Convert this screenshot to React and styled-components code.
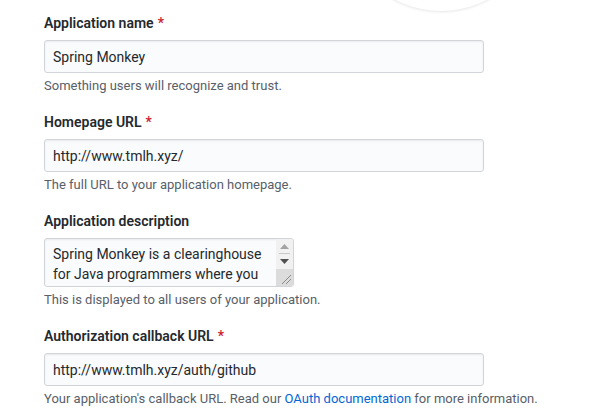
import React from "react";
import styled, { createGlobalStyle } from "styled-components";

const GlobalStyle = createGlobalStyle`
    html, body {
        margin: 0;
        padding: 0;
        background: #fff;
    }
    body {
        font-family: Roboto, "Noto Sans", "Liberation Sans", sans-serif;
        color: #24292e;
        overflow: hidden;
    }
`;

const fields = [
    {
        label: "Application name",
        required: true,
        value: "Spring Monkey",
        note: "Something users will recognize and trust.",
    },
    {
        label: "Homepage URL",
        required: true,
        value: "http://www.tmlh.xyz/",
        note: "The full URL to your application homepage.",
    },
    {
        label: "Application description",
        multiline: true,
        value:
            "Spring Monkey is a clearinghouse for Java programmers where you can share snippets, ask questions and find answers.",
        note: "This is displayed to all users of your application.",
    },
    {
        label: "Authorization callback URL",
        required: true,
        value: "http://www.tmlh.xyz/auth/github",
        docsLink: true,
    },
];

// fake classic scrollbar, headless chrome hides the real one
const ScrollBar = () => (
    <Track>
        <ArrowButton divider>
            <svg width="9" height="5" viewBox="0 0 9 5">
                <polygon points="0,5 4.5,0 9,5" fill="#a3a3a3" />
            </svg>
        </ArrowButton>
        <ArrowButton>
            <svg width="9" height="5" viewBox="0 0 9 5">
                <polygon points="0,0 4.5,5 9,0" fill="#505050" />
            </svg>
        </ArrowButton>
        <Resizer>
            <svg width="17" height="17" viewBox="0 0 17 17">
                <line x1="15" y1="6" x2="6" y2="15" stroke="#8a8a8a" />
                <line x1="15" y1="10" x2="10" y2="15" stroke="#8a8a8a" />
            </svg>
        </Resizer>
    </Track>
);

const App = () => {
    return (
        <Page>
            <GlobalStyle />
            <Avatar />
            <Form onSubmit={(e) => e.preventDefault()}>
                {fields.map((field) => (
                    <FormGroup key={field.label}>
                        <Label>
                            {field.label}
                            {field.required && <Required>*</Required>}
                        </Label>
                        {field.multiline ? (
                            <TextBox>
                                <TextArea defaultValue={field.value} rows={2} />
                                <ScrollBar />
                            </TextBox>
                        ) : (
                            <Input type="text" defaultValue={field.value} />
                        )}
                        {field.docsLink ? (
                            <Note>
                                Your application's callback URL. Read our{" "}
                                <Link href="#">OAuth documentation</Link> for
                                more information.
                            </Note>
                        ) : (
                            <Note>{field.note}</Note>
                        )}
                    </FormGroup>
                ))}
            </Form>
        </Page>
    );
};

const Page = styled.div`
    position: relative;
    width: 611px;
    height: 418px;
    overflow: hidden;
    background: #fff;
`;

const Avatar = styled.div`
    position: absolute;
    left: 342px;
    top: -186px;
    width: 196px;
    height: 196px;
    border-radius: 50%;
    background: #fff;
    border: 1px solid #f0f0f0;
    box-shadow: 0 1px 2px rgba(0, 0, 0, 0.05);
`;

const Form = styled.form`
    display: flex;
    flex-direction: column;
    gap: 17px;
    padding: 13px 0 0 44px;
`;

const FormGroup = styled.div`
    display: flex;
    flex-direction: column;
    align-items: flex-start;
`;

const Label = styled.label`
    display: block;
    font-size: 14px;
    line-height: 20px;
    font-weight: 600;
    color: #24292e;
    margin-bottom: 7px;
`;

const Required = styled.span`
    color: #cb2431;
    margin-left: 4px;
`;

const Input = styled.input`
    box-sizing: border-box;
    width: 440px;
    height: 33px;
    padding: 6px 8px;
    font-family: inherit;
    font-size: 14px;
    line-height: 20px;
    color: #24292e;
    background-color: #fafbfc;
    border: 1px solid #d1d5da;
    border-radius: 3px;
    box-shadow: inset 0 1px 2px rgba(27, 31, 35, 0.075);
    outline: none;
`;

const TextBox = styled.div`
    display: flex;
    box-sizing: border-box;
    width: 250px;
    height: 49px;
    background-color: #fafbfc;
    border: 1px solid #d1d5da;
    border-radius: 3px;
    box-shadow: inset 0 1px 2px rgba(27, 31, 35, 0.075);
    overflow: hidden;
`;

const TextArea = styled.textarea`
    flex: 1;
    min-width: 0;
    box-sizing: border-box;
    height: 100%;
    margin: 0;
    padding: 5px 8px;
    font-family: inherit;
    font-size: 14px;
    line-height: 20px;
    color: #24292e;
    background: transparent;
    border: none;
    outline: none;
    resize: none;
    overflow: hidden;
`;

const Track = styled.div`
    display: flex;
    flex-direction: column;
    width: 17px;
    background: #f1f1f1;
`;

const ArrowButton = styled.div`
    display: flex;
    align-items: center;
    justify-content: center;
    height: 15px;
    position: relative;
    border-bottom: 1px solid ${(p) => (p.divider ? "#f1f1f1" : "transparent")};

    &::after {
        content: "";
        display: ${(p) => (p.divider ? "block" : "none")};
        position: absolute;
        left: 3px;
        right: 3px;
        bottom: -1px;
        height: 1px;
        background: #c8c8c8;
    }
`;

const Resizer = styled.div`
    flex: 1;
    display: flex;
    align-items: flex-end;
    background: #dcdcdc;
`;

const Note = styled.p`
    margin: 4px 0 0;
    font-size: 13px;
    line-height: 18px;
    color: #586069;
`;

const Link = styled.a`
    color: #0366d6;
    text-decoration: none;
`;

export default App;
